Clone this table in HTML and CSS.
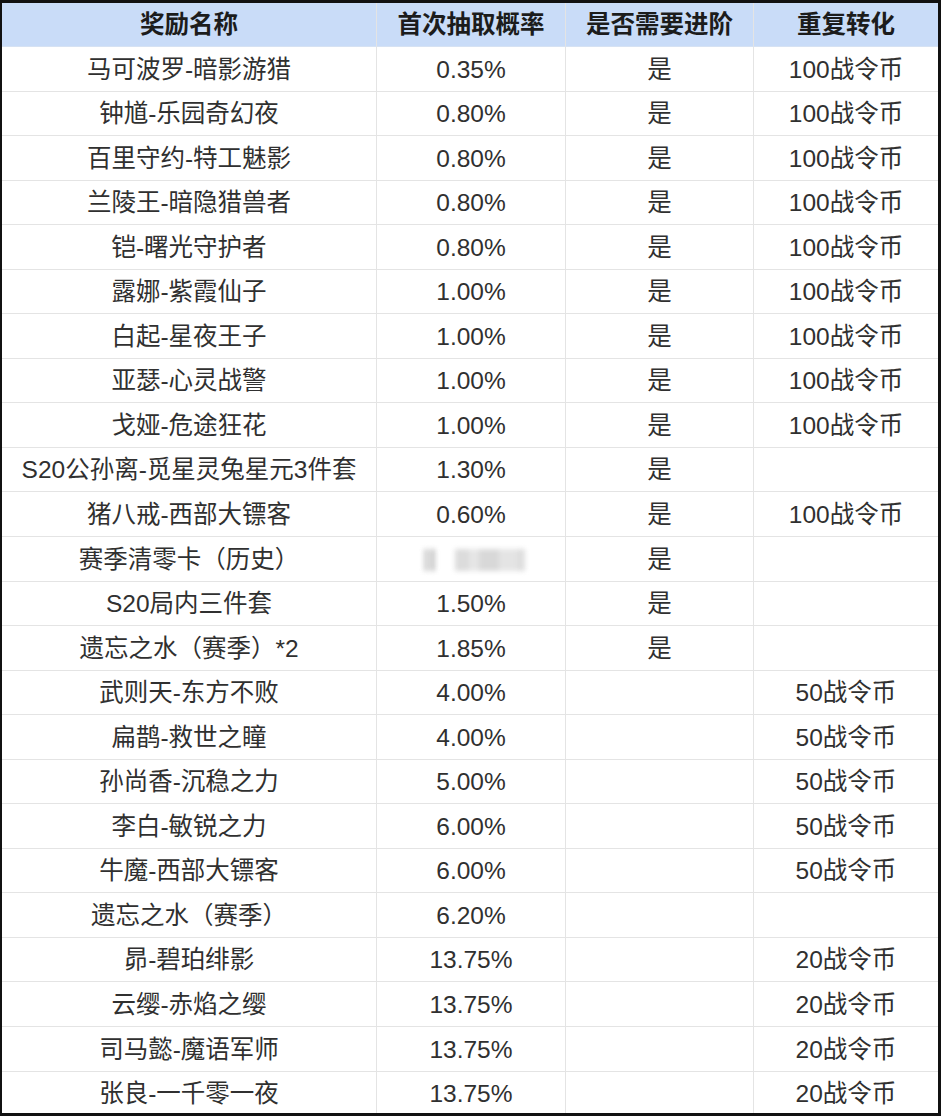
FILE: index.html
```html
<!DOCTYPE html>
<html lang="zh-CN">
<head>
<meta charset="utf-8">
<title>奖励概率</title>
<link rel="stylesheet" href="styles.css">
</head>
<body>
<div class="sheet">
  <div class="grid">
    <div class="cell head">奖励名称</div>
    <div class="cell head">首次抽取概率</div>
    <div class="cell head">是否需要进阶</div>
    <div class="cell head">重复转化</div>

    <div class="cell">马可波罗-暗影游猎</div><div class="cell">0.35%</div><div class="cell">是</div><div class="cell">100战令币</div>
    <div class="cell">钟馗-乐园奇幻夜</div><div class="cell">0.80%</div><div class="cell">是</div><div class="cell">100战令币</div>
    <div class="cell">百里守约-特工魅影</div><div class="cell">0.80%</div><div class="cell">是</div><div class="cell">100战令币</div>
    <div class="cell">兰陵王-暗隐猎兽者</div><div class="cell">0.80%</div><div class="cell">是</div><div class="cell">100战令币</div>
    <div class="cell">铠-曙光守护者</div><div class="cell">0.80%</div><div class="cell">是</div><div class="cell">100战令币</div>
    <div class="cell">露娜-紫霞仙子</div><div class="cell">1.00%</div><div class="cell">是</div><div class="cell">100战令币</div>
    <div class="cell">白起-星夜王子</div><div class="cell">1.00%</div><div class="cell">是</div><div class="cell">100战令币</div>
    <div class="cell">亚瑟-心灵战警</div><div class="cell">1.00%</div><div class="cell">是</div><div class="cell">100战令币</div>
    <div class="cell">戈娅-危途狂花</div><div class="cell">1.00%</div><div class="cell">是</div><div class="cell">100战令币</div>
    <div class="cell">S20公孙离-觅星灵兔星元3件套</div><div class="cell">1.30%</div><div class="cell">是</div><div class="cell"></div>
    <div class="cell">猪八戒-西部大镖客</div><div class="cell">0.60%</div><div class="cell">是</div><div class="cell">100战令币</div>
    <div class="cell">赛季清零卡（历史）</div><div class="cell"><span class="smudge"></span></div><div class="cell">是</div><div class="cell"></div>
    <div class="cell">S20局内三件套</div><div class="cell">1.50%</div><div class="cell">是</div><div class="cell"></div>
    <div class="cell">遗忘之水（赛季）*2</div><div class="cell">1.85%</div><div class="cell">是</div><div class="cell"></div>
    <div class="cell">武则天-东方不败</div><div class="cell">4.00%</div><div class="cell"></div><div class="cell">50战令币</div>
    <div class="cell">扁鹊-救世之瞳</div><div class="cell">4.00%</div><div class="cell"></div><div class="cell">50战令币</div>
    <div class="cell">孙尚香-沉稳之力</div><div class="cell">5.00%</div><div class="cell"></div><div class="cell">50战令币</div>
    <div class="cell">李白-敏锐之力</div><div class="cell">6.00%</div><div class="cell"></div><div class="cell">50战令币</div>
    <div class="cell">牛魔-西部大镖客</div><div class="cell">6.00%</div><div class="cell"></div><div class="cell">50战令币</div>
    <div class="cell">遗忘之水（赛季）</div><div class="cell">6.20%</div><div class="cell"></div><div class="cell"></div>
    <div class="cell">昴-碧珀绯影</div><div class="cell">13.75%</div><div class="cell"></div><div class="cell">20战令币</div>
    <div class="cell">云缨-赤焰之缨</div><div class="cell">13.75%</div><div class="cell"></div><div class="cell">20战令币</div>
    <div class="cell">司马懿-魔语军师</div><div class="cell">13.75%</div><div class="cell"></div><div class="cell">20战令币</div>
    <div class="cell">张良-一千零一夜</div><div class="cell">13.75%</div><div class="cell"></div><div class="cell">20战令币</div>
  </div>
</div>
</body>
</html>
```
FILE: styles.css
```css
html, body {
  margin: 0;
  padding: 0;
  background: #ffffff;
}
body {
  font-family: "Liberation Sans", "Noto Sans CJK SC", sans-serif;
  color: #303030;
}
.sheet {
  width: 936px;
  border-top: 3px solid #111;
  border-left: 2px solid #111;
  border-right: 3px solid #111;
  border-bottom: 3px solid #111;
  box-shadow: 0 3px 0 #c8c8c8;
}
.grid {
  display: grid;
  grid-template-columns: 375px 189px 188px 184px;
  grid-template-rows: 44px;
  grid-auto-rows: 44.56px;
  height: 1110px;
  overflow: hidden;
}
.cell {
  display: flex;
  align-items: center;
  justify-content: center;
  padding-top: 2px;
  font-size: 24.5px;
  line-height: 1;
  border-bottom: 1px solid #e4e4e4;
  border-right: 1px solid #e4e4e4;
  box-sizing: border-box;
  white-space: nowrap;
}
.cell:nth-child(4n) {
  border-right: none;
}
.head {
  background: #c9dcf8;
  font-weight: 700;
  color: #1c1c1c;
  border-bottom: 1px solid #d6e2f3;
}
.smudge {
  display: inline-block;
  width: 108px;
  height: 22px;
  margin-left: 4px;
  background: linear-gradient(90deg,
    transparent 0 5px,
    #c4c4c4 5px 9px,
    #ececec 9px 12px,
    #b8b8b8 12px 16px,
    transparent 16px 36px,
    #d6d6d6 36px 50px,
    #e2e2e2 50px 60px,
    #d2d2d2 60px 80px,
    #e0e0e0 80px 98px,
    #d8d8d8 98px 106px,
    transparent 106px);
  filter: blur(2.5px);
  opacity: 0.85;
}
```
